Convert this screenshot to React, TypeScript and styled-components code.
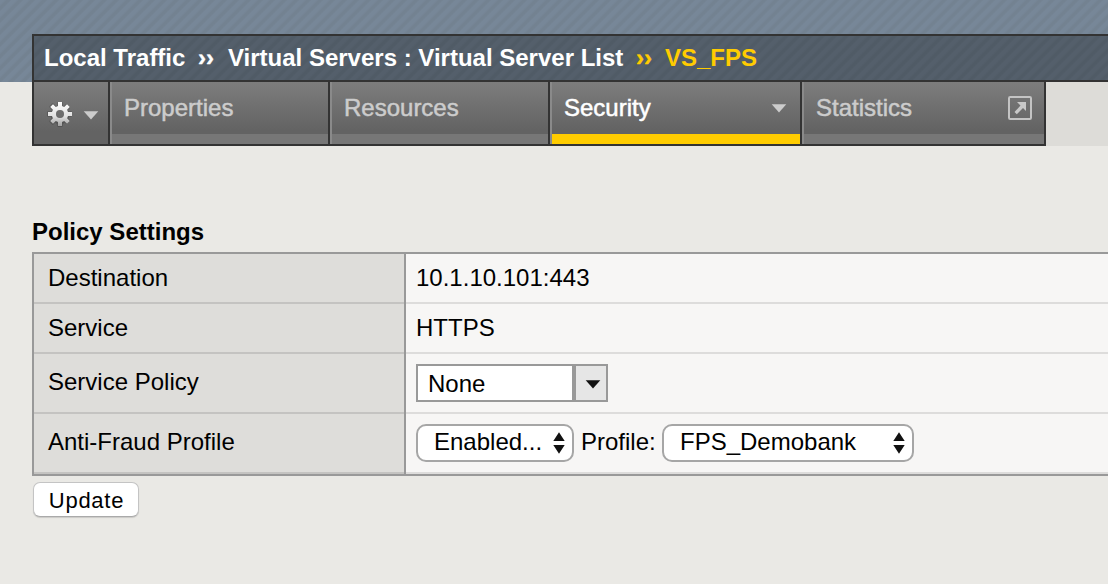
import React from "react";
import styled, { createGlobalStyle } from "styled-components";

const GlobalStyle = createGlobalStyle`
  * { box-sizing: border-box; }
  body {
    margin: 0;
    background: #eae9e5;
    color: #000;
    font: 24px/28px "Liberation Sans", Arial, sans-serif;
    overflow: hidden;
  }
`;

const Page = styled.div`
  width: 1108px;
  height: 584px;
  overflow: hidden;
  white-space: nowrap;
`;

const Header = styled.header`
  height: 82px;
  padding: 34px 0 0 32px;
  background: repeating-linear-gradient(135deg, #778798 0 3px, #738291 5px 7px, #778798 8.485px);
`;

const Breadcrumb = styled.nav`
  display: flex;
  height: 48px;
  padding: 8px 0 0 10px;
  border: 2px solid #333;
  border-right: 0;
  background: repeating-linear-gradient(135deg, #545f6b 0 3px, #505b66 5px 7px, #545f6b 8.485px);
  color: #fff;
  font-weight: bold;
`;

const Crumb = styled.span<{ $w: number; $current?: boolean }>`
  flex: 0 0 ${(p) => p.$w}px;
  color: ${(p) => (p.$current ? "#fc0" : "#fff")};
`;

const Chevrons = styled(Crumb)`
  padding-left: 1px;
  -webkit-text-stroke: 0.4px currentColor;
`;

const TabStrip = styled.div`
  display: flex;
  height: 64px;
  padding-left: 32px;
  background: linear-gradient(90deg, #eae9e5 32px, #dddcd8 32px);
`;

const Tab = styled.div<{ $w: number; $active?: boolean }>`
  display: flex;
  justify-content: space-between;
  width: ${(p) => p.$w}px;
  padding: 12px ${(p) => (p.$active ? 13 : 11)}px 0 14px;
  border: solid #333;
  border-width: 0 2px 2px 0;
  box-shadow: inset 2px 0 #8a8a8a;
  background:
    linear-gradient(${(p) => (p.$active ? "#fc0, #fc0" : "#777, #777")}) 0 100% / 100% 10px no-repeat,
    linear-gradient(#7d7d7d, #636363 48px);
  color: ${(p) => (p.$active ? "#fff" : "#ccc")};
  -webkit-text-stroke: 0.5px currentColor;
`;

const GearTab = styled.div`
  display: flex;
  width: 78px;
  padding: 17.500px 0 0 11.700px;
  gap: 9px;
  border: solid #333;
  border-width: 0 2px 2px;
  background: linear-gradient(#7d7d7d, #636363 50px);
`;

const Caret = styled.svg<{ $top: number }>`
  display: block;
  margin-top: ${(p) => p.$top}px;
`;

const Content = styled.main`
  padding: 72px 0 0 32px;
`;

const Heading = styled.h1`
  margin: 0 0 6px;
  font: inherit;
  font-weight: bold;
`;

const Settings = styled.div`
  border: solid #999;
  border-width: 2px 0 2px 2px;
`;

const Row = styled.div<{ $h: number }>`
  display: flex;
  height: ${(p) => p.$h}px;
`;

const Label = styled.div<{ $top: number }>`
  flex: 0 0 370px;
  padding: ${(p) => p.$top}px 0 0 14px;
  background: #dedddA;
  border-bottom: 2px solid #c4c3c1;
`;

const Value = styled.div`
  display: flex;
  flex: 1;
  margin-left: 2px;
  padding: 10px 0 0 10px;
  background: #f7f6f5;
  border-bottom: 2px solid #dddcdb;
  box-shadow: -2px 0 #999;
`;

const Combo = styled.div`
  display: flex;
  width: 192px;
  height: 38px;
  border: 2px solid #999;
  background: #fff;
`;

const ComboText = styled.span`
  flex: 1;
  padding: 4px 0 0 10px;
`;

const ComboButton = styled.span`
  display: flex;
  width: 34px;
  padding: 14px 0 0 9px;
  border-left: 4px solid #999;
  background: #e6e6e6;
`;

const Select = styled.div<{ $w: number }>`
  display: flex;
  justify-content: space-between;
  width: ${(p) => p.$w}px;
  height: 38px;
  padding: 2px 7.5px 0 16px;
  border: 2px solid #a6a6a6;
  border-radius: 10px;
  background: #fff;
`;

const InlineLabel = styled.span`
  width: 88px;
  padding: 4px 0 0 7px;
`;

const Update = styled.button`
  display: block;
  width: 106px;
  height: 35px;
  margin: 6px 0 0 1px;
  padding: 2px 0 0 1px;
  border: 1px solid #c4c4c4;
  border-bottom-color: #aaa;
  border-radius: 7px;
  box-shadow: 0 1px 1px #0002;
  background: #fff;
  color: #000;
  font: 22px/28px "Liberation Sans", Arial, sans-serif;
  letter-spacing: 0.75px;
`;

const StepperIcon = styled.svg`
  display: block;
  margin-top: 4px;
`;

const Stepper = () => (
  <StepperIcon width="12" height="22" viewBox="0 0 12 22">
    <path d="M0.3 9 6 0.3 11.7 9ZM0.3 13h11.4L6 21.7Z" fill="#111" />
  </StepperIcon>
);

const DownCaret = ({ top, fill }: { top: number; fill: string }) => (
  <Caret $top={top} width="16" height="9" viewBox="0 0 16 9">
    <path d="M0.7 0.3h14.6L8 8.5Z" fill={fill} />
  </Caret>
);

const Gear = () => (
  <svg width="28" height="28" viewBox="0 0 28 28">
    <defs>
      <linearGradient id="gear" x1="0" y1="0" x2="0" y2="1">
        <stop offset="0" stopColor="#fff" />
        <stop offset="0.6" stopColor="#e0e0e0" />
        <stop offset="1" stopColor="#a0a0a0" />
      </linearGradient>
      <mask id="hole">
        <rect width="28" height="28" fill="#fff" />
        <circle cx="14" cy="14" r="4" fill="#000" />
      </mask>
    </defs>
    <g opacity=".35" fill="#333" mask="url(#hole)">
      <circle cx="14" cy="14.8" r="9.4" />
      {[0, 45, 90, 135].map((a) => (
        <rect key={a} x="11.3" y="2" width="5.4" height="25" rx="1" transform={`rotate(${a} 14 14)`} />
      ))}
    </g>
    <path
      fill="url(#gear)"
      mask="url(#hole)"
      d="M12 2h4v4l2.2.9L21 4.2 23.8 7l-2.7 2.8L22 12h4v4h-4l-.9 2.2 2.7 2.8-2.8 2.8-2.8-2.7L16 22v4h-4v-4l-2.2-.9L7 23.8 4.2 21l2.7-2.8L6 16H2v-4h4l.9-2.2L4.2 7 7 4.2l2.8 2.7L12 6Z"
    />
  </svg>
);

const External = () => (
  <Caret $top={0} width="26" height="26" viewBox="0 0 26 26">
    <rect x="2" y="3" width="22" height="22" rx="1.2" fill="none" stroke="#c4c4c4" strokeWidth="2" />
    <path d="M10 8h9v9l-3-3-6.2 6.2-2.3-2.2L13.5 11.5Z" fill="#c8c8c8" />
  </Caret>
);

export default function App() {
  return (
    <Page>
      <GlobalStyle />
      <Header>
        <Breadcrumb>
          <Crumb $w={153}>Local Traffic</Crumb>
          <Chevrons $w={31}>››</Chevrons>
          <Crumb $w={407}>Virtual Servers : Virtual Server List</Crumb>
          <Chevrons $w={30} $current>››</Chevrons>
          <Crumb $w={110} $current>VS_FPS</Crumb>
        </Breadcrumb>
      </Header>
      <TabStrip>
        <GearTab>
          <Gear />
          <DownCaret top={11} fill="#ccc" />
        </GearTab>
        <Tab $w={220}>Properties</Tab>
        <Tab $w={220}>Resources</Tab>
        <Tab $w={252} $active>
          Security
          <DownCaret top={10} fill="#ccc" />
        </Tab>
        <Tab $w={244}>
          Statistics
          <External />
        </Tab>
      </TabStrip>
      <Content>
        <Heading>Policy Settings</Heading>
        <Settings>
          <Row $h={50}>
            <Label $top={10}>Destination</Label>
            <Value>10.1.10.101:443</Value>
          </Row>
          <Row $h={50}>
            <Label $top={10}>Service</Label>
            <Value>HTTPS</Value>
          </Row>
          <Row $h={60}>
            <Label $top={14}>Service Policy</Label>
            <Value>
              <Combo>
                <ComboText>None</ComboText>
                <ComboButton>
                  <DownCaret top={0} fill="#111" />
                </ComboButton>
              </Combo>
            </Value>
          </Row>
          <Row $h={60}>
            <Label $top={14}>Anti-Fraud Profile</Label>
            <Value>
              <Select $w={158}>
                Enabled...
                <Stepper />
              </Select>
              <InlineLabel>Profile:</InlineLabel>
              <Select $w={252}>
                FPS_Demobank
                <Stepper />
              </Select>
            </Value>
          </Row>
        </Settings>
        <Update>Update</Update>
      </Content>
    </Page>
  );
}
